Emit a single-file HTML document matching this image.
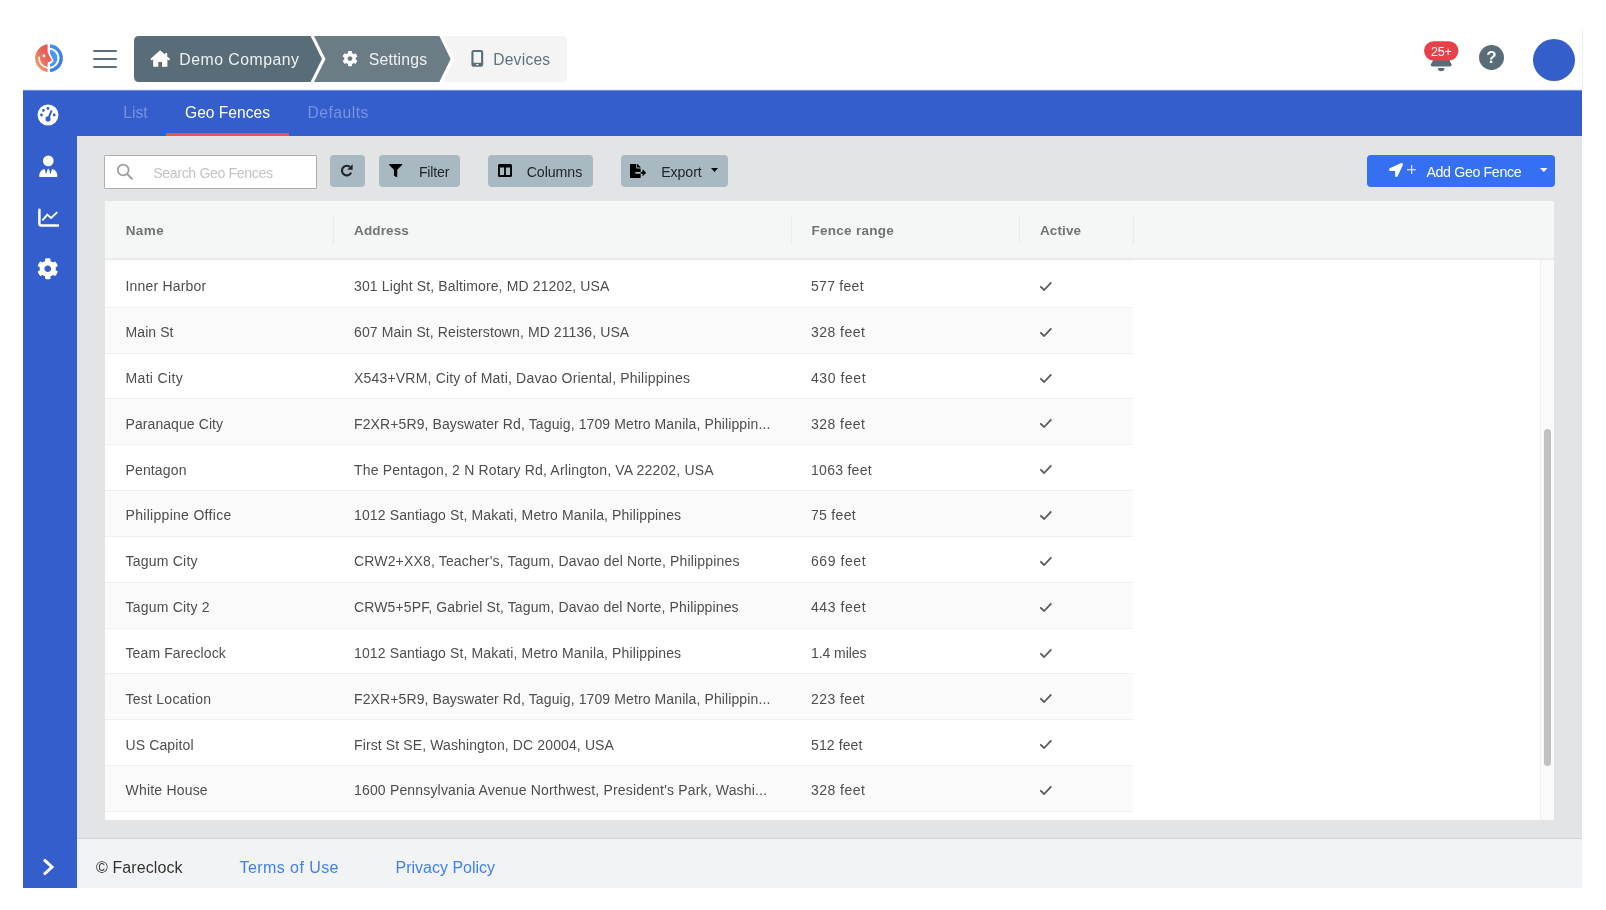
<!DOCTYPE html>
<html lang="en">
<head>
<meta charset="utf-8">
<title>Fareclock - Geo Fences</title>
<style>
*{box-sizing:border-box;}
html,body{margin:0;padding:0;}
body{width:1606px;height:910px;background:#fff;position:relative;overflow:hidden;font-family:"Liberation Sans",sans-serif;color:#333;}
.abs{position:absolute;}
#app{position:absolute;left:0;top:0;width:1606px;height:910px;will-change:transform;}
#sidebar{left:23px;top:90px;width:54px;height:797.500px;background:#335ecc;border-top:1px solid #6d8cdb;}
#navbar{left:77px;top:90px;width:1505.200px;height:45.500px;background:#335ecc;border-top:1px solid #6d8cdb;}
#content{left:77px;top:135.500px;width:1505.200px;height:702.500px;background:#e3e4e6;}
#footer{left:77px;top:838px;width:1505.200px;height:49.500px;background:#f1f3f5;border-top:1px solid #c9d4dc;}
#footer a{text-decoration:none;} #footer span,#footer a{position:absolute;top:18.800px;font-size:16px;line-height:20px;white-space:nowrap;}
.tab{position:absolute;top:-0.400px;height:45px;line-height:43px;font-size:16px;color:#7893df;white-space:nowrap;}
.tab.on{color:#fff;}
#tabline{left:166.300px;top:132.800px;width:122.400px;height:2.800px;background:#e4574f;}
/* breadcrumbs */
.bc{position:absolute;top:37.300px;height:46px;line-height:46px;font-size:16.5px;white-space:nowrap;}
/* toolbar */
.btn{position:absolute;top:155px;height:32px;margin:0;padding:0;border:0;border-radius:4px;background:#a9b9c1;color:#1d2326;font-family:inherit;font-size:13.5px;line-height:32px;white-space:nowrap;text-align:left;display:block;}
#search{left:104px;top:155px;width:213px;height:34px;background:#fff;border:1px solid #aeaeae;border-radius:1px;}
#search span{position:absolute;left:48.300px;top:0.800px;line-height:32px;font-size:14.200px;letter-spacing:-0.400px;color:#c3c3c3;white-space:nowrap;}
/* table */
#table{left:105px;top:201px;width:1449px;height:619px;background:#fff;}
#thead{left:0;top:0;width:1449px;height:59px;background:#f5f7f7;border-bottom:2px solid #e9ebed;}
.th{position:absolute;top:0.500px;height:58px;line-height:58px;font-size:13.500px;font-weight:bold;color:#737373;white-space:nowrap;}
.sep{position:absolute;top:15px;width:1px;height:28px;background:#e9ecec;}
.row{position:absolute;left:0;width:1028.400px;height:46px;border-bottom:1px solid #efefef;background:#fff;}
.row.alt{background:#fafafa;}
.row span{position:absolute;top:1.900px;line-height:46px;font-size:14px;color:#4e4e4e;white-space:nowrap;}
.c1{left:20.5px;}.c2{left:249px;}.c3{left:706px;}
.row svg{position:absolute;left:933.950px;top:18.700px;}
#track{left:1435px;top:58px;width:14px;height:561px;background:#fafafa;border-left:1px solid #f0f0f0;}
#thumb{left:1439px;top:227.5px;width:7px;height:337px;border-radius:4px;background:#c1c1c1;}
</style>
</head>
<body>
<div id="app">
<div id="sidebar" class="abs"></div>
<div id="navbar" class="abs">
  <span class="tab" style="left:46.300px;font-size:15.700px">List</span>
  <span class="tab on" style="left:108px;font-size:15.600px">Geo Fences</span>
  <span class="tab" style="left:230.600px;font-size:15.700px;letter-spacing:0.450px">Defaults</span>
</div>
<div id="tabline" class="abs"></div>
<div id="content" class="abs"></div>
<div id="footer" class="abs">
  <span style="left:19px;color:#333;letter-spacing:0.100px">© Fareclock</span>
  <a style="left:162.600px;color:#3f81ea;letter-spacing:0.420px">Terms of Use</a>
  <a style="left:318.500px;color:#3f81ea">Privacy Policy</a>
</div>

<!-- top header -->
<div class="abs" style="left:23px;top:88px;width:1559.200px;height:2px;background:linear-gradient(#fff,#e6ebf6)"></div>
<div class="abs" style="left:1582px;top:30px;width:1px;height:60px;background:#eef1f6"></div>
<svg class="abs" style="left:34.5px;top:44px" width="28" height="28.5" viewBox="0 0 28 28.5">
  <defs>
    <linearGradient id="lg1" x1="0.9" y1="0.1" x2="0.1" y2="0.9"><stop offset="0" stop-color="#e9524f"/><stop offset="0.5" stop-color="#ea6a5d"/><stop offset="1" stop-color="#f2a670"/></linearGradient>
    <linearGradient id="lg2" x1="0" y1="0" x2="1" y2="1"><stop offset="0" stop-color="#4296f5"/><stop offset="1" stop-color="#3b74dc"/></linearGradient>
  </defs>
  <path d="M12.6 0.370 A13.900 13.900 0 0 0 12.6 28.030 L12.6 18.900 L13.200 18.300 L16.900 16.850 L12.6 8.300 Z" fill="url(#lg1)"/>
  <circle cx="8.950" cy="11.700" r="1.500" fill="#fff"/>
  <path d="M4.100 13.300 A9.800 9.800 0 0 0 12.6 23.900" fill="none" stroke="#fff" stroke-width="1.700" stroke-linecap="round"/>
  <path d="M14.900 0.330 A13.900 13.900 0 0 1 14.900 28.070 L14.900 24.760 A10.600 10.600 0 0 0 14.900 3.640 Z" fill="url(#lg2)"/>
  <path d="M14.900 5.750 A8.500 8.500 0 0 1 14.900 22.650 L14.900 20.300 Q18.300 18.700 18.500 16.600 L14.900 9.200 Z" fill="#4799f4"/>
</svg>
<div class="abs" style="left:93.200px;top:49.600px;width:24px;height:2.600px;border-radius:1.4px;background:#5c707b"></div>
<div class="abs" style="left:93.200px;top:57.600px;width:24px;height:2.600px;border-radius:1.4px;background:#5c707b"></div>
<div class="abs" style="left:93.200px;top:65.500px;width:24px;height:2.600px;border-radius:1.4px;background:#5c707b"></div>
<svg class="abs" style="left:134px;top:36px" width="434" height="46" viewBox="0 0 434 46">
  <path d="M309 0 H428 Q433 0 433 5 V41 Q433 46 428 46 H309 L320.5 23 Z" fill="#f4f4f4"/>
  <path d="M180 0 H305.3 L316.6 23 L305.3 46 H180 L191.5 23 Z" fill="#6b7c85"/>
  <path d="M5 0 H176.6 L188 23 L176.6 46 H5 Q0 46 0 41 V5 Q0 0 5 0 Z" fill="#596d78"/>
  <!-- home icon -->
  <path fill="#fff" d="M26.100 14.200 L31.300 18.750 V17 H33.200 V20.400 L36.200 23 L34.900 24.500 L33.400 23.200 V30.800 H28 V26 H24.300 V30.800 H19.200 V23.200 L17.700 24.500 L16.400 23 Z"/>
  <!-- gear icon -->
  <path transform="translate(208.2,14.800) scale(0.0305)" fill="#fff" d="M487.400 315.700l-42.600-24.600c4.300-23.200 4.300-47 0-70.200l42.600-24.600c4.900-2.800 7.100-8.600 5.500-14-11.100-35.600-30-67.800-54.700-94.600-3.800-4.100-10-5.100-14.800-2.300L380.800 110c-17.900-15.400-38.500-27.300-60.800-35.100V25.800c0-5.600-3.900-10.500-9.400-11.700-36.700-8.200-74.300-7.800-109.200 0-5.500 1.200-9.400 6.100-9.400 11.700V75c-22.200 7.900-42.800 19.800-60.800 35.100L88.700 85.500c-4.900-2.800-11-1.900-14.800 2.300-24.700 26.700-43.600 58.900-54.700 94.600-1.700 5.400.6 11.200 5.500 14L67.300 221c-4.300 23.200-4.300 47 0 70.200l-42.600 24.600c-4.900 2.800-7.100 8.600-5.500 14 11.100 35.600 30 67.800 54.700 94.600 3.800 4.100 10 5.100 14.800 2.300l42.600-24.600c17.900 15.400 38.500 27.300 60.800 35.100v49.200c0 5.600 3.900 10.500 9.400 11.700 36.700 8.200 74.300 7.800 109.200 0 5.500-1.200 9.400-6.100 9.400-11.700v-49.200c22.200-7.900 42.800-19.800 60.800-35.100l42.600 24.600c4.900 2.800 11 1.900 14.800-2.300 24.700-26.700 43.600-58.900 54.700-94.600 1.500-5.500-.7-11.300-5.600-14.100zM256 336c-44.100 0-80-35.900-80-80s35.900-80 80-80 80 35.900 80 80-35.900 80-80 80z"/>
  <!-- mobile icon -->
  <path fill="#596d78" fill-rule="evenodd" d="M339.600 14 H347 Q349.200 14 349.200 16.200 V28.600 Q349.200 30.800 347 30.800 H339.600 Q337.400 30.800 337.400 28.600 V16.200 Q337.400 14 339.600 14 Z M339.500 16 V26.800 H347.100 V16 Z M342.200 28 H344.400 V29.200 H342.200 Z"/>
</svg>
<span class="bc" style="left:179.3px;color:#eef1f3;font-size:15.8px;letter-spacing:0.500px">Demo Company</span>
<span class="bc" style="left:368.7px;color:#eef1f3;font-size:15.8px;letter-spacing:0.2px">Settings</span>
<span class="bc" style="left:493.200px;color:#5f717c;font-size:15.600px;letter-spacing:0.250px">Devices</span>
<!-- bell -->
<svg class="abs" style="left:1424px;top:40px" width="36" height="33" viewBox="0 0 36 33">
  <path d="M9 20 L25.500 20 Q26 22.500 27.600 24.200 Q28.200 26.200 26.200 26.400 H8.200 Q6.200 26.200 6.800 24.200 Q8.400 22.500 9 20 Z" fill="#596d78"/>
  <path d="M14 28 H20.500 A3.250 3.250 0 0 1 14 28 Z" fill="#596d78"/>
  <rect x="0" y="1.200" width="34.500" height="19.300" rx="9.650" fill="#e9414a"/>
</svg>
<span class="abs" style="left:1424px;top:41.2px;width:34.500px;height:19.300px;line-height:22px;text-align:center;color:#fff;font-size:12.500px;letter-spacing:-0.300px">25+</span>
<div class="abs" style="left:1479px;top:44.800px;width:25px;height:25px;border-radius:50%;background:#596d78;color:#fff;font-weight:bold;font-size:17px;line-height:26px;text-align:center">?</div>
<div class="abs" style="left:1533px;top:38.700px;width:42px;height:42px;border-radius:50%;background:#345fca"></div>



<!-- toolbar -->
<div id="search" class="abs">
  <svg style="position:absolute;left:10.500px;top:7.200px" width="18" height="18" viewBox="0 0 18 18"><circle cx="7.2" cy="7" r="5.4" fill="none" stroke="#9b9b9b" stroke-width="1.7"/><path d="M11.200 11 L16 15.800" stroke="#9b9b9b" stroke-width="1.900" stroke-linecap="round"/></svg>
  <span>Search Geo Fences</span>
</div>
<button type="button" class="btn" style="left:330.300px;width:34.900px">
  <svg style="position:absolute;left:9.300px;top:8.700px" width="13" height="13" viewBox="0 0 14 14"><path d="M10.900 3.300 A5.200 5.200 0 1 0 12 9.300" fill="none" stroke="#1d2326" stroke-width="2.300"/><path d="M13.600 0.400 V6.200 H7.800 Z" fill="#1d2326"/></svg>
</button>
<button type="button" class="btn" style="left:379.400px;width:80.900px">
  <svg style="position:absolute;left:10.100px;top:9.100px" width="13.200" height="13.200" viewBox="0 0 512 512"><path fill="#000" d="M487.976 0H24.028C2.710 0-8.047 25.866 7.058 40.971L192 225.941V432c0 7.831 3.821 15.170 10.237 19.662l80 55.980C298.020 518.690 320 507.493 320 487.980V225.941l184.947-184.970C520.021 25.896 509.338 0 487.976 0z"/></svg>
  <span style="position:absolute;left:39.500px;top:0.900px;font-size:14.200px;letter-spacing:-0.210px">Filter</span>
</button>
<button type="button" class="btn" style="left:488px;width:104.500px">
  <svg style="position:absolute;left:9.600px;top:9.200px" width="14" height="13" viewBox="0 0 14 13"><path fill="#000" fill-rule="evenodd" d="M1.600 0 H12.400 Q14 0 14 1.600 V11.400 Q14 13 12.400 13 H1.600 Q0 13 0 11.400 V1.600 Q0 0 1.600 0 Z M1.900 3.600 V11.100 H6.100 V3.600 Z M7.900 3.600 V11.100 H12.100 V3.600 Z"/></svg>
  <span style="position:absolute;left:38.700px;top:0.900px;font-size:14.200px;letter-spacing:-0.070px">Columns</span>
</button>
<button type="button" class="btn" style="left:620.500px;width:107.500px">
  <svg style="position:absolute;left:9.300px;top:8.800px" width="16" height="14.200" viewBox="0 0 576 512"><path fill="#000" d="M384 121.900c0-6.300-2.500-12.400-7-16.900L279.100 7c-4.500-4.500-10.600-7-17-7H256v128h128zM571 308l-95.700-96.400c-10.100-10.100-27.400-3-27.400 11.300V288h-64v64h64v65.200c0 14.300 17.300 21.400 27.400 11.300L571 332c6.600-6.600 6.600-17.400 0-24zm-379 28v-32c0-8.800 7.200-16 16-16h176V160H248c-13.200 0-24-10.800-24-24V0H24C10.700 0 0 10.700 0 24v464c0 13.300 10.700 24 24 24h336c13.300 0 24-10.700 24-24V352H208c-8.800 0-16-7.200-16-16z"/></svg>
  <span style="position:absolute;left:40.700px;top:0.900px;font-size:14.200px;letter-spacing:-0.090px">Export</span>
  <svg style="position:absolute;left:90.600px;top:13.300px" width="7" height="4" viewBox="0 0 7 4"><path d="M0 0 H7 L3.500 4 Z" fill="#000"/></svg>
</button>
<button type="button" class="btn" style="left:1367.200px;width:188px;background:#3570f2;color:#fff">
  <svg style="position:absolute;left:22px;top:8.200px" width="14" height="14" viewBox="0 0 512 512"><path fill="#fff" d="M444.520 3.520L28.740 195.420c-47.970 22.390-31.980 92.750 19.190 92.750h175.910v175.910c0 51.170 70.360 67.170 92.750 19.190l191.900-415.780c15.990-38.390-25.590-79.970-63.970-63.970z"/></svg>
  <svg style="position:absolute;left:39.500px;top:9.500px" width="9.400" height="9.400" viewBox="0 0 9.400 9.400"><path d="M4.700 0 V9.400 M0 4.700 H9.400" stroke="#fff" stroke-width="1.050"/></svg>
  <span style="position:absolute;left:59.300px;top:0.900px;font-size:14.200px;letter-spacing:-0.360px">Add Geo Fence</span>
  <svg style="position:absolute;left:173px;top:13.400px" width="7.500" height="4" viewBox="0 0 7.500 4"><path d="M0 0 H7.500 L3.750 4 Z" fill="#fff"/></svg>
</button>


<!-- table -->
<div id="table" class="abs">
  <div class="row alt" style="top:58px;height:4px"></div>
  <div class="row" style="top:61px;height:46px"><span class="c1" style="top:1.00px;letter-spacing:0.18px">Inner Harbor</span><span class="c2" style="top:1.00px;letter-spacing:0.13px">301 Light St, Baltimore, MD 21202, USA</span><span class="c3" style="top:1.00px;letter-spacing:0.28px">577 feet</span><svg style="top:18.90px" width="14" height="11" viewBox="0 0 14 11"><path d="M1.300 5.300 L5.200 9 L12.300 1.300" fill="none" stroke="#5a5a5a" stroke-width="1.800" stroke-linejoin="round"/></svg></div>
  <div class="row alt" style="top:107px;height:46px"><span class="c1" style="top:1.00px;letter-spacing:0.09px">Main St</span><span class="c2" style="top:1.00px;letter-spacing:0.10px">607 Main St, Reisterstown, MD 21136, USA</span><span class="c3" style="top:1.00px;letter-spacing:0.46px">328 feet</span><svg style="top:18.73px" width="14" height="11" viewBox="0 0 14 11"><path d="M1.300 5.300 L5.200 9 L12.300 1.300" fill="none" stroke="#5a5a5a" stroke-width="1.800" stroke-linejoin="round"/></svg></div>
  <div class="row" style="top:153px;height:45px"><span class="c1" style="top:1.00px;letter-spacing:0.34px">Mati City</span><span class="c2" style="top:1.00px;letter-spacing:0.19px">X543+VRM, City of Mati, Davao Oriental, Philippines</span><span class="c3" style="top:1.00px;letter-spacing:0.56px">430 feet</span><svg style="top:18.56px" width="14" height="11" viewBox="0 0 14 11"><path d="M1.300 5.300 L5.200 9 L12.300 1.300" fill="none" stroke="#5a5a5a" stroke-width="1.800" stroke-linejoin="round"/></svg></div>
  <div class="row alt" style="top:198px;height:46px"><span class="c1" style="top:2.00px;letter-spacing:0.08px">Paranaque City</span><span class="c2" style="top:2.00px;letter-spacing:0.11px">F2XR+5R9, Bayswater Rd, Taguig, 1709 Metro Manila, Philippin...</span><span class="c3" style="top:2.00px;letter-spacing:0.46px">328 feet</span><svg style="top:19.39px" width="14" height="11" viewBox="0 0 14 11"><path d="M1.300 5.300 L5.200 9 L12.300 1.300" fill="none" stroke="#5a5a5a" stroke-width="1.800" stroke-linejoin="round"/></svg></div>
  <div class="row" style="top:244px;height:46px"><span class="c1" style="top:2.00px;letter-spacing:0.14px">Pentagon</span><span class="c2" style="top:2.00px;letter-spacing:0.17px">The Pentagon, 2 N Rotary Rd, Arlington, VA 22202, USA</span><span class="c3" style="top:2.00px;letter-spacing:0.28px">1063 feet</span><svg style="top:19.22px" width="14" height="11" viewBox="0 0 14 11"><path d="M1.300 5.300 L5.200 9 L12.300 1.300" fill="none" stroke="#5a5a5a" stroke-width="1.800" stroke-linejoin="round"/></svg></div>
  <div class="row alt" style="top:290px;height:46px"><span class="c1" style="top:1.00px;letter-spacing:0.30px">Philippine Office</span><span class="c2" style="top:1.00px;letter-spacing:0.13px">1012 Santiago St, Makati, Metro Manila, Philippines</span><span class="c3" style="top:1.00px;letter-spacing:0.30px">75 feet</span><svg style="top:19.05px" width="14" height="11" viewBox="0 0 14 11"><path d="M1.300 5.300 L5.200 9 L12.300 1.300" fill="none" stroke="#5a5a5a" stroke-width="1.800" stroke-linejoin="round"/></svg></div>
  <div class="row" style="top:336px;height:46px"><span class="c1" style="top:1.00px;letter-spacing:0.22px">Tagum City</span><span class="c2" style="top:1.00px;letter-spacing:0.16px">CRW2+XX8, Teacher's, Tagum, Davao del Norte, Philippines</span><span class="c3" style="top:1.00px;letter-spacing:0.56px">669 feet</span><svg style="top:18.88px" width="14" height="11" viewBox="0 0 14 11"><path d="M1.300 5.300 L5.200 9 L12.300 1.300" fill="none" stroke="#5a5a5a" stroke-width="1.800" stroke-linejoin="round"/></svg></div>
  <div class="row alt" style="top:382px;height:46px"><span class="c1" style="top:1.00px;letter-spacing:0.21px">Tagum City 2</span><span class="c2" style="top:1.00px;letter-spacing:0.13px">CRW5+5PF, Gabriel St, Tagum, Davao del Norte, Philippines</span><span class="c3" style="top:1.00px;letter-spacing:0.56px">443 feet</span><svg style="top:18.71px" width="14" height="11" viewBox="0 0 14 11"><path d="M1.300 5.300 L5.200 9 L12.300 1.300" fill="none" stroke="#5a5a5a" stroke-width="1.800" stroke-linejoin="round"/></svg></div>
  <div class="row" style="top:428px;height:45px"><span class="c1" style="top:1.00px;letter-spacing:0.11px">Team Fareclock</span><span class="c2" style="top:1.00px;letter-spacing:0.13px">1012 Santiago St, Makati, Metro Manila, Philippines</span><span class="c3" style="top:1.00px;letter-spacing:-0.07px">1.4 miles</span><svg style="top:18.54px" width="14" height="11" viewBox="0 0 14 11"><path d="M1.300 5.300 L5.200 9 L12.300 1.300" fill="none" stroke="#5a5a5a" stroke-width="1.800" stroke-linejoin="round"/></svg></div>
  <div class="row alt" style="top:473px;height:46px"><span class="c1" style="top:2.00px;letter-spacing:0.25px">Test Location</span><span class="c2" style="top:2.00px;letter-spacing:0.11px">F2XR+5R9, Bayswater Rd, Taguig, 1709 Metro Manila, Philippin...</span><span class="c3" style="top:2.00px;letter-spacing:0.41px">223 feet</span><svg style="top:19.37px" width="14" height="11" viewBox="0 0 14 11"><path d="M1.300 5.300 L5.200 9 L12.300 1.300" fill="none" stroke="#5a5a5a" stroke-width="1.800" stroke-linejoin="round"/></svg></div>
  <div class="row" style="top:519px;height:46px"><span class="c1" style="top:2.00px;letter-spacing:0.12px">US Capitol</span><span class="c2" style="top:2.00px;letter-spacing:0.12px">First St SE, Washington, DC 20004, USA</span><span class="c3" style="top:2.00px;letter-spacing:0.11px">512 feet</span><svg style="top:19.20px" width="14" height="11" viewBox="0 0 14 11"><path d="M1.300 5.300 L5.200 9 L12.300 1.300" fill="none" stroke="#5a5a5a" stroke-width="1.800" stroke-linejoin="round"/></svg></div>
  <div class="row alt" style="top:565px;height:46px"><span class="c1" style="top:1.00px;letter-spacing:0.20px">White House</span><span class="c2" style="top:1.00px;letter-spacing:0.17px">1600 Pennsylvania Avenue Northwest, President's Park, Washi...</span><span class="c3" style="top:1.00px;letter-spacing:0.46px">328 feet</span><svg style="top:19.03px" width="14" height="11" viewBox="0 0 14 11"><path d="M1.300 5.300 L5.200 9 L12.300 1.300" fill="none" stroke="#5a5a5a" stroke-width="1.800" stroke-linejoin="round"/></svg></div>
  <div id="track" class="abs"></div>
  <div id="thumb" class="abs"></div>
  <div id="thead" class="abs">
    <span class="th" style="left:20.700px;letter-spacing:0.430px">Name</span>
    <span class="th" style="left:249px;letter-spacing:0.130px">Address</span>
    <span class="th" style="left:706.500px;letter-spacing:0.270px">Fence range</span>
    <span class="th" style="left:935px;letter-spacing:0.120px">Active</span>
    <i class="sep" style="left:228px"></i><i class="sep" style="left:685.500px"></i><i class="sep" style="left:913.500px"></i><i class="sep" style="left:1027.800px"></i>
  </div>
</div>

<!-- sidebar icons -->
<svg class="abs" style="left:37.400px;top:104px" width="22" height="22" viewBox="-11 -11 22 22">
  <circle cx="0" cy="0" r="10.450" fill="#fff"/>
  <g fill="#335ecc"><circle cx="-6.500" cy="0" r="1.400"/><circle cx="-4.600" cy="-4.600" r="1.400"/><circle cx="0" cy="-6.500" r="1.400"/><circle cx="6.200" cy="0" r="1.400"/><circle cx="0" cy="3.900" r="2.550"/><path d="M2.800 -4.900 L4.500 -4.300 L1.200 4.300 L-0.800 3.500 Z"/></g>
</svg>
<svg class="abs" style="left:38px;top:155px" width="21" height="23" viewBox="0 0 21 23">
  <circle cx="10.300" cy="5.900" r="5.350" fill="#fff"/>
  <path fill="#fff" d="M1.100 20.900 Q1.100 21.950 2.150 21.950 H18.400 Q19.450 21.950 19.450 20.900 Q19.100 14.900 13.900 14 L12.500 19.300 L11.300 15.300 L10.900 14.300 L10.300 13.500 L9.700 14.300 L9.300 15.300 L8.100 19.300 L6.700 14 Q1.500 14.900 1.100 20.900 Z"/>
</svg>
<svg class="abs" style="left:36.800px;top:207px" width="23" height="21" viewBox="0 0 23 21">
  <path d="M2.400 2.700 V16.800 Q2.400 18.400 4 18.400 H21" fill="none" stroke="#fff" stroke-width="2.500" stroke-linecap="round"/>
  <path d="M5.900 12.800 L10.300 7.600 L14 11 L19.700 5.600" fill="none" stroke="#fff" stroke-width="1.900" stroke-linecap="round" stroke-linejoin="round"/>
</svg>
<svg class="abs" style="left:37.350px;top:258.350px" width="21.500" height="21.500" viewBox="0 0 512 512"><path fill="#fff" d="M487.400 315.700l-42.600-24.600c4.300-23.200 4.300-47 0-70.200l42.600-24.600c4.900-2.800 7.100-8.600 5.500-14-11.100-35.600-30-67.800-54.700-94.600-3.800-4.100-10-5.100-14.800-2.300L380.800 110c-17.900-15.400-38.500-27.300-60.800-35.100V25.800c0-5.600-3.900-10.500-9.400-11.700-36.700-8.200-74.300-7.800-109.200 0-5.500 1.200-9.400 6.100-9.400 11.700V75c-22.200 7.900-42.800 19.800-60.800 35.100L88.700 85.500c-4.900-2.800-11-1.900-14.800 2.300-24.700 26.700-43.600 58.900-54.700 94.600-1.700 5.400.6 11.200 5.500 14L67.300 221c-4.300 23.200-4.300 47 0 70.200l-42.600 24.600c-4.900 2.800-7.100 8.600-5.500 14 11.100 35.600 30 67.800 54.700 94.600 3.800 4.100 10 5.100 14.800 2.300l42.600-24.600c17.900 15.400 38.500 27.300 60.800 35.100v49.200c0 5.600 3.900 10.500 9.400 11.700 36.700 8.200 74.300 7.800 109.200 0 5.500-1.200 9.400-6.100 9.400-11.700v-49.200c22.200-7.900 42.800-19.800 60.800-35.100l42.600 24.600c4.900 2.800 11 1.900 14.800-2.300 24.700-26.700 43.600-58.900 54.700-94.600 1.500-5.500-.7-11.300-5.600-14.100zM256 336c-44.100 0-80-35.900-80-80s35.900-80 80-80 80 35.900 80 80-35.900 80-80 80z"/></svg>
<svg class="abs" style="left:41px;top:856px" width="15" height="22" viewBox="0 0 15 22"><path d="M3.800 4.400 L11 11 L3.800 17.600" fill="none" stroke="#fff" stroke-width="3" stroke-linecap="round" stroke-linejoin="miter"/></svg>

</div>
</body>
</html>
